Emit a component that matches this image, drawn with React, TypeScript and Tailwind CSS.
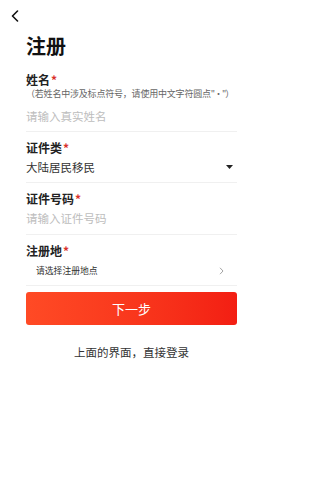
import React from "react";

const Star = () => <span className="text-[#d9302a] ml-[1px]">*</span>;

const Field: React.FC<{ label: string; children: React.ReactNode }> = ({ label, children }) => (
  <div className="border-b border-[#f0f0f0]">
    <div className="text-[12px] leading-[16px] font-bold text-[#222]">
      {label}
      <Star />
    </div>
    {children}
  </div>
);

export default function App() {
  return (
    <div
      className="w-[263px] h-[480px] bg-white relative"
      style={{ fontFamily: '"Noto Sans CJK SC", "Noto Sans", sans-serif' }}
    >
      <div className="pt-[10px] pl-[11px] h-[24px]">
        <svg width="8" height="12" viewBox="0 0 8 12" fill="none">
          <path d="M6.5 1 L1.5 6 L6.5 11" stroke="#111" strokeWidth="1.6" strokeLinecap="round" strokeLinejoin="round" />
        </svg>
      </div>

      <div className="px-[26px]">
        <h1 className="mt-[8px] text-[20px] leading-[28px] font-bold text-[#111]">注册</h1>

        <div className="mt-[12px]">
          <Field label="姓名">
            <div className="text-[9px] leading-[12px] text-[#666] whitespace-nowrap tracking-[-0.2px]">
              （若姓名中涉及标点符号，请使用中文字符圆点<span className="tracking-[-1px]">"·"</span>）
            </div>
            <div className="text-[11.5px] leading-[16px] text-[#bdbdbd] mt-[8px] pb-[7px]">请输入真实姓名</div>
          </Field>

          <div className="mt-[8px]">
            <Field label="证件类">
              <div className="flex items-center justify-between mt-[3px] pb-[7px]">
                <span className="text-[11.5px] leading-[16px] text-[#333]">大陆居民移民</span>
                <svg width="7" height="4" viewBox="0 0 7 4" className="mr-[4px]">
                  <path d="M0 0 H7 L3.5 4 Z" fill="#222" />
                </svg>
              </div>
            </Field>
          </div>

          <div className="mt-[8px]">
            <Field label="证件号码">
              <div className="text-[11.5px] leading-[16px] text-[#bdbdbd] mt-[3px] pb-[8px]">请输入证件号码</div>
            </Field>
          </div>

          <div className="mt-[8px]">
            <Field label="注册地">
              <div className="flex items-center justify-between mt-[5px] pb-[7px] pl-[10px]">
                <span className="text-[8.8px] leading-[14px] text-[#333]">请选择注册地点</span>
                <svg width="5" height="8" viewBox="0 0 5 8" fill="none" className="mr-[13px]">
                  <path d="M1 0.8 L4 4 L1 7.2" stroke="#999" strokeWidth="0.9" />
                </svg>
              </div>
            </Field>
          </div>
        </div>

        <button className="mt-[6px] w-full h-[33px] rounded-[3px] bg-gradient-to-r from-[#ff4a25] to-[#f31e13] text-white text-[13px] leading-[33px]">
          下一步
        </button>

        <div className="mt-[19px] text-center text-[11.5px] leading-[16px] text-[#333]">上面的界面，直接登录</div>
      </div>
    </div>
  );
}
